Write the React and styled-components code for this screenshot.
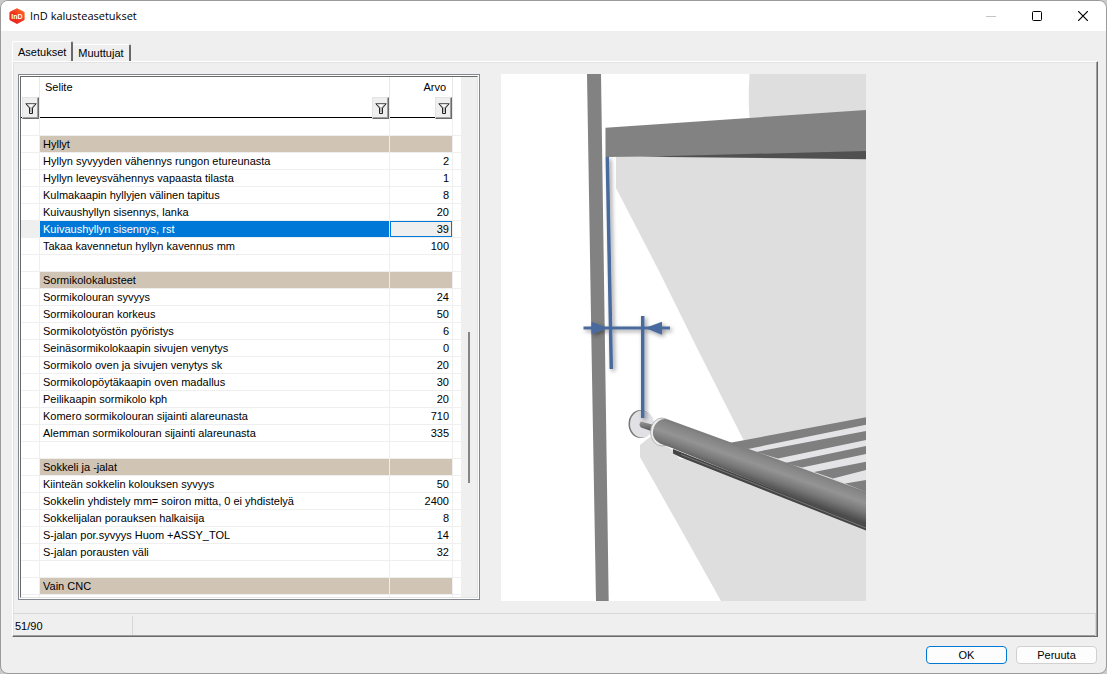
import React, { useState } from "react";
import styled, { createGlobalStyle } from "styled-components";

const rows = [
  { blank: true },
  { group: "Hyllyt" },
  { label: "Hyllyn syvyyden vähennys rungon etureunasta", value: 2 },
  { label: "Hyllyn leveysvähennys vapaasta tilasta", value: 1 },
  { label: "Kulmakaapin hyllyjen välinen tapitus", value: 8 },
  { label: "Kuivaushyllyn sisennys, lanka", value: 20 },
  { label: "Kuivaushyllyn sisennys, rst", value: 39 },
  { label: "Takaa kavennetun hyllyn kavennus mm", value: 100 },
  { blank: true },
  { group: "Sormikolokalusteet" },
  { label: "Sormikolouran syvyys", value: 24 },
  { label: "Sormikolouran korkeus", value: 50 },
  { label: "Sormikolotyöstön pyöristys", value: 6 },
  { label: "Seinäsormikolokaapin sivujen venytys", value: 0 },
  { label: "Sormikolo oven ja sivujen venytys sk", value: 20 },
  { label: "Sormikolopöytäkaapin oven madallus", value: 30 },
  { label: "Peilikaapin sormikolo kph", value: 20 },
  { label: "Komero sormikolouran sijainti alareunasta", value: 710 },
  { label: "Alemman sormikolouran sijainti alareunasta", value: 335 },
  { blank: true },
  { group: "Sokkeli ja -jalat" },
  { label: "Kiinteän sokkelin kolouksen syvyys", value: 50 },
  { label: "Sokkelin yhdistely mm= soiron mitta, 0 ei yhdistelyä", value: 2400 },
  { label: "Sokkelijalan porauksen halkaisija", value: 8 },
  { label: "S-jalan por.syvyys Huom +ASSY_TOL", value: 14 },
  { label: "S-jalan porausten väli", value: 32 },
  { blank: true },
  { group: "Vain CNC" },
  { blank: true },
];

function FilterIcon() {
  return (
    <svg width="12" height="12" viewBox="0 0 12 12" aria-hidden="true">
      <path d="M0.5 1.5h11L7.5 6v5l-3-1.5V6z" fill="#b8b8b8" />
      <path d="M3 2.5h6L6 5.5z" fill="#fff" />
      <path d="M0.5 1.5h11" fill="none" stroke="#666" />
      <path d="M1 2l3.5 4v5.5M11 2L7.5 6v5.5M4.5 11.5h3" fill="none" stroke="#222" />
    </svg>
  );
}

function Logo() {
  return (
    <svg width="16" height="16" viewBox="0 0 16 16" aria-hidden="true">
      <defs>
        <linearGradient id="logo" x1="1" y1="0" x2="0" y2="1">
          <stop offset="0" stopColor="#ff7a1c" />
          <stop offset="0.5" stopColor="#f2361f" />
          <stop offset="1" stopColor="#e31b23" />
        </linearGradient>
      </defs>
      <path d="M8 0.2L14.6 3.4Q15.6 4 15.6 5V11Q15.6 12 14.6 12.6L8 15.9L1.4 12.6Q0.4 12 0.4 11V5Q0.4 4 1.4 3.4Z" fill="url(#logo)" />
      <text x="8" y="10.5" textAnchor="middle" fontFamily="Liberation Sans, sans-serif" fontWeight="700" fontSize="7" fill="#fff">InD</text>
    </svg>
  );
}

function ShelfPicture() {
  return (
    <Picture viewBox="0 0 365 527" role="img" aria-label="Kuivaushyllyn sisennys">
      <defs>
        <linearGradient id="rod" gradientUnits="userSpaceOnUse" x1="256" y1="376" x2="245" y2="407">
          <stop offset="0" stopColor="#777" />
          <stop offset="0.15" stopColor="#858585" />
          <stop offset="0.42" stopColor="#949494" />
          <stop offset="0.7" stopColor="#777" />
          <stop offset="1" stopColor="#4b4b4b" />
        </linearGradient>
        <linearGradient id="pin" x1="0" y1="0" x2="0" y2="1">
          <stop offset="0" stopColor="#999" />
          <stop offset="1" stopColor="#4c4c4c" />
        </linearGradient>
        <filter id="shadow" x="-50%" y="-20%" width="200%" height="140%" filterUnits="userSpaceOnUse">
          <feDropShadow dx="2" dy="2" stdDeviation="2" floodColor="#000" floodOpacity="0.4" />
        </filter>
      </defs>
      <rect width="365" height="527" fill="#fff" />

      {/* back wall */}
      <path d="M248.500 0Q247 26 248.500 45H365V0Z" fill="#dedede" />
      <path d="M115 80V114L158 197L197 276L242 365L262 392L365 430V80Z" fill="#dedede" />
      <path d="M139 371L149 363L170 375L188 385H365V527H220L187 468L139 383Z" fill="#dedede" />
      <path d="M172 378L179 385L190 385Z" fill="#fff" />

      {/* side panel and shelf */}
      <path d="M86 0H100L104 273L107.700 527H95L90.500 273Z" fill="#828282" />
      <path d="M104.500 53.700L365 36V80L104.500 83Z" fill="#828282" />
      <path d="M140 82.700L365 77V85.300Z" fill="#505050" />

      {/* slats */}
      <path d="M247 374L365 350V409L346 409L290 390Z" fill="#e4e4e7" />
      <path d="M228 369L365 343.300V350.700L247 375Z" fill="#7f7f80" />
      <path d="M255 378L365 357V366L277 384.500Z" fill="#7f7f80" />
      <path d="M284 389L365 372V380L301 393.500Z" fill="#7f7f80" />
      <path d="M313 398L365 387.700V396L332 404.500Z" fill="#7f7f80" />
      <path d="M344 409.500L365 406V418Z" fill="#7f7f80" />

      {/* wall flange and pin */}
      <ellipse cx="139.500" cy="350" rx="12" ry="14" fill="#7b7676" />
      <ellipse cx="141" cy="350" rx="12" ry="13.500" fill="#e0e0e5" />
      <path d="M140 347.500L153 351V358L140 353.500Q137 350.500 140 347.500Z" fill="url(#pin)" />

      {/* rod */}
      <path d="M172 375L365 452V456.500L179 383L172 379.500Z" fill="#454545" />
      <path d="M180 380.500L365 454" stroke="#777" fill="none" />
      <ellipse cx="161" cy="358" rx="11.500" ry="14" fill="#eee" stroke="#999" strokeWidth="0.700" />
      <path d="M167 345.500L365 417.700V453L171 374L159 369.500Q149 364 153 353Q158 343 167 345.500Z" fill="url(#rod)" />

      {/* dimension marks */}
      <g filter="url(#shadow)" stroke="#4a6a9d" fill="#4a6a9d">
        <path d="M106.300 83L110.300 295" strokeWidth="3.500" />
        <path d="M141.700 242V344" strokeWidth="3.500" />
        <path d="M82.500 254H169" strokeWidth="3" />
        <path d="M90.500 247.700V260.300L107 254Z" stroke="none" />
        <path d="M161 247.700V260.800L144 254Z" stroke="none" />
      </g>
    </Picture>
  );
}

export default function App() {
  const [tab, setTab] = useState("Asetukset");
  const [selected, setSelected] = useState(6);

  return (
    <Window>
      <GlobalStyle />
      <TitleBar>
        <Logo />
        <Title>InD kalusteasetukset</Title>
        <CaptionButton aria-label="Minimize" disabled>
          <svg width="10" height="10"><path d="M0 5.500H10" stroke="#c4c4c4" /></svg>
        </CaptionButton>
        <CaptionButton aria-label="Maximize">
          <svg width="10" height="10"><rect x="0.500" y="0.500" width="9" height="9" rx="1" fill="none" stroke="#000" /></svg>
        </CaptionButton>
        <CaptionButton aria-label="Close">
          <svg width="10" height="10"><path d="M0 0L10 10M10 0L0 10" stroke="#000" strokeWidth="1.200" /></svg>
        </CaptionButton>
      </TitleBar>

      <Tabs role="tablist">
        {["Asetukset", "Muuttujat"].map((name) => (
          <Tab key={name} role="tab" aria-selected={tab === name} $active={tab === name} onClick={() => setTab(name)}>
            {name}
          </Tab>
        ))}
      </Tabs>

      <Page>
        <Content>
          <GridFrame>
            <GridInner>
              <TableWrap>
                <Table>
                  <colgroup>
                    <col width="19" />
                    <col />
                    <col width="63" />
                    <col width="8" />
                  </colgroup>
                  <thead>
                    <tr>
                      <HeadCell>
                        <HeadContent>
                          <FilterButton aria-label="Suodata"><FilterIcon /></FilterButton>
                        </HeadContent>
                      </HeadCell>
                      <HeadCell>
                        <HeadContent>
                          <HeadLabel>Selite</HeadLabel>
                          <FilterButton aria-label="Suodata selite"><FilterIcon /></FilterButton>
                        </HeadContent>
                      </HeadCell>
                      <HeadCell>
                        <HeadContent>
                          <HeadLabel $right>Arvo</HeadLabel>
                          <FilterButton aria-label="Suodata arvo"><FilterIcon /></FilterButton>
                        </HeadContent>
                      </HeadCell>
                      <td />
                    </tr>
                  </thead>
                  <tbody>
                    {rows.map((row, i) => (
                      <Row
                        key={i}
                        $group={!!row.group}
                        $selected={i === selected}
                        onClick={() => row.label && setSelected(i)}
                      >
                        <MarkCell />
                        <LabelCell>{row.group || row.label}</LabelCell>
                        <ValueCell>{row.value}</ValueCell>
                        <EndCell />
                      </Row>
                    ))}
                  </tbody>
                </Table>
              </TableWrap>
              <ScrollTrack>
                <ScrollThumb />
              </ScrollTrack>
            </GridInner>
          </GridFrame>
          <ShelfPicture />
        </Content>
        <StatusBar>
          <StatusCell>51/90</StatusCell>
        </StatusBar>
      </Page>

      <Footer>
        <Button $primary>OK</Button>
        <Button>Peruuta</Button>
      </Footer>
    </Window>
  );
}

const GlobalStyle = createGlobalStyle`
  * {
    box-sizing: border-box;
  }
  body {
    margin: 0;
    background: #c9c9c9;
    color: #000;
    overflow: hidden;
  }
  body, button, table {
    font-family: "Liberation Sans", Arial, sans-serif;
    font-size: 11px;
    line-height: 16px;
  }
  button {
    padding: 0;
    margin: 0;
    color: inherit;
  }
  svg {
    display: block;
  }
`;

const Window = styled.div`
  display: flex;
  flex-direction: column;
  height: 100vh;
  border: 1px solid #9b9b9b;
  border-radius: 8px;
  background: #efefef;
  overflow: hidden;
`;

const TitleBar = styled.header`
  display: flex;
  align-items: center;
  flex: none;
  height: 30px;
  padding-left: 8px;
  background: #fff;
`;

const Title = styled.h1`
  flex: 1;
  margin: 0 0 0 5px;
  font-family: "Open Sans", "Segoe UI", sans-serif;
  font-size: 11px;
  font-weight: 400;
`;

const CaptionButton = styled.button`
  display: flex;
  align-items: center;
  justify-content: center;
  width: 46px;
  height: 100%;
  border: 0;
  background: none;
`;

const Tabs = styled.div`
  display: flex;
  align-items: flex-end;
  flex: none;
  height: 30px;
  padding-left: 11px;
`;

const Tab = styled.button`
  height: ${(p) => (p.$active ? 20 : 17)}px;
  padding: 0 5px;
  border: 1px solid #fff;
  border-right: 2px solid #696969;
  border-bottom: 0;
  border-left-width: ${(p) => (p.$active ? 1 : 0)}px;
  border-radius: 2px 2px 0 0;
  background: #efefef;
`;

const Page = styled.main`
  display: flex;
  flex-direction: column;
  flex: 1;
  min-height: 0;
  margin: 0 8px 0 11px;
  border: 1px solid #fff;
  border-right-color: #696969;
  border-bottom-color: #696969;
  box-shadow: inset -1px -1px #a0a0a0, inset 1px 1px #e3e3e3;
`;

const Content = styled.div`
  display: flex;
  align-items: flex-start;
  flex: 1;
  gap: 21px;
  min-height: 0;
  padding: 12px 5px 13px;
`;

const GridFrame = styled.div`
  flex: none;
  align-self: stretch;
  width: 462px;
  padding: 1px;
  border: 1px solid #828790;
  background: #fff;
`;

const GridInner = styled.div`
  display: flex;
  height: 100%;
  border: 1px solid #696969;
  border-right-color: #e3e3e3;
  border-bottom-color: #e3e3e3;
`;

const TableWrap = styled.div`
  flex: 1;
  overflow: hidden;
`;

const Table = styled.table`
  width: 100%;
  table-layout: fixed;
  border-spacing: 0;
  td, th {
    padding: 0;
    white-space: nowrap;
  }
`;

const HeadCell = styled.th`
  height: 42px;
  border-right: 1px solid #e8e8e8;
  background: linear-gradient(#000, #000) 0 40px / 100% 1px no-repeat border-box;
  font-weight: 400;
`;

const HeadContent = styled.div`
  display: flex;
  flex-direction: column;
  align-items: flex-end;
  justify-content: flex-end;
  height: 42px;
`;

const HeadLabel = styled.span`
  align-self: stretch;
  height: 18px;
  padding: 0 6px 0 5px;
  text-align: ${(p) => (p.$right ? "right" : "left")};
`;

const FilterButton = styled.button`
  display: flex;
  align-items: center;
  justify-content: center;
  width: 17px;
  height: 22px;
  border: 1px solid #e3e3e3;
  border-right-color: #696969;
  border-bottom-color: #696969;
  background: #efefef;
  box-shadow: inset -1px -1px #a0a0a0;
`;

const MarkCell = styled.td`
  border-right: 1px solid #efefef;
`;

const LabelCell = styled.td`
  border-right: 1px solid #efefef;
`;

const ValueCell = styled.td`
  border-right: 1px solid #efefef;
  text-align: right;
`;

const EndCell = styled.td``;

const Row = styled.tr`
  td {
    height: 17px;
    border-bottom: 1px solid #efefef;
    background: #fff;
    background-clip: padding-box;
  }
  ${LabelCell}, ${ValueCell} {
    padding: 0 3px;
    background-color: ${(p) => (p.$group ? "#d0c4b4" : "#fff")};
  }
  ${(p) =>
    p.$selected &&
    `
    ${MarkCell} {
      background-color: #efefef;
    }
    ${LabelCell} {
      background-color: #0078d7;
      color: #fff;
    }
    ${ValueCell} {
      background-color: #efefef;
      box-shadow: inset 0 0 0 1px #0078d7;
    }
  `}
`;

const ScrollTrack = styled.div`
  display: grid;
  grid-template-rows: 255fr 151fr 114fr;
  justify-content: center;
  width: 16px;
  background: #efefef;
`;

const ScrollThumb = styled.div`
  grid-row: 2;
  width: 2px;
  background: #858585;
`;

const Picture = styled.svg`
  flex: 0 1 365px;
  min-width: 0;
`;

const StatusBar = styled.footer`
  display: flex;
  flex: none;
  height: 23px;
  margin: 0 1px 0 0;
  padding: 2px 0 1px;
  border-top: 1px solid #d7d7d7;
  border-right: 1px solid #d7d7d7;
`;

const StatusCell = styled.span`
  width: 120px;
  padding: 2px;
  border-right: 1px solid #d7d7d7;
`;

const Footer = styled.div`
  display: flex;
  align-items: center;
  justify-content: flex-end;
  flex: none;
  gap: 9px;
  height: 36px;
  padding-right: 9px;
`;

const Button = styled.button`
  width: 81px;
  height: 18px;
  border: 1px solid ${(p) => (p.$primary ? "#0078d4" : "#d0d0d0")};
  border-radius: 4px;
  background: #fdfdfd;
`;
